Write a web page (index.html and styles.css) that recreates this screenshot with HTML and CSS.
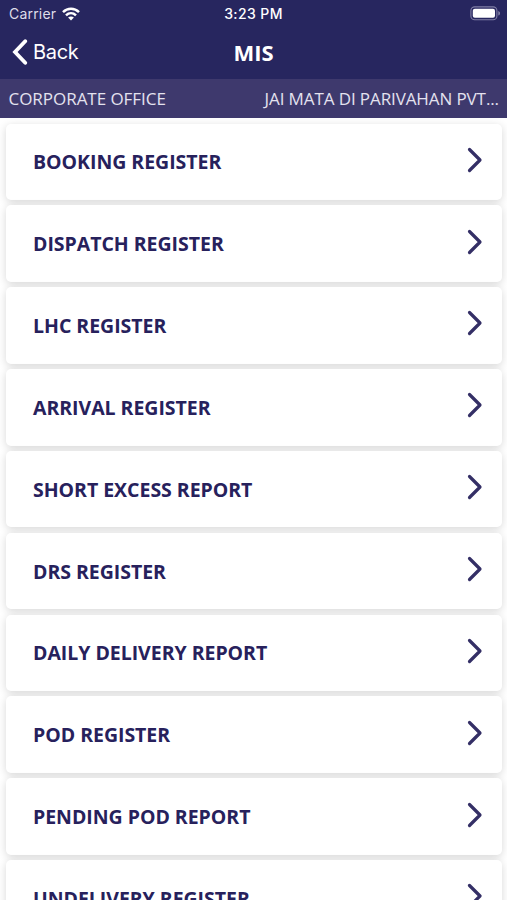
FILE: index.html
```html
<!DOCTYPE html>
<html lang="en">
<head>
<meta charset="utf-8">
<title>MIS</title>
<link rel="stylesheet" href="styles.css">
</head>
<body>
<header class="header">
  <div class="status">
    <div class="carrier"><span>Carrier</span>
      <svg class="wifi" width="18" height="14" viewBox="0 0 18 14" fill="none" stroke="#fff" stroke-width="2.5"><path d="M1 5.2C5.6.7 12.4.7 17 5.2M4 8.3c2.9-2.8 7.1-2.8 10 0"/><path d="M9 13.4 6.1 10.5c1.7-1.5 4.1-1.5 5.8 0z" fill="#fff" stroke="none"/></svg>
    </div>
    <div class="time">3:23 PM</div>
    <svg class="battery" width="31" height="15" viewBox="0 0 31 15"><rect x=".9" y=".9" width="26" height="12.8" rx="3.8" fill="none" stroke="#817fa6" stroke-width="1.1"/><rect x="2.8" y="2.8" width="22.2" height="9" rx="2" fill="#fff"/><path d="M28.4 5c2 .8 2 3.8 0 4.6z" fill="#9290b3"/></svg>
  </div>
  <nav class="nav">
    <a class="back"><svg width="16" height="26" viewBox="0 0 16 26" fill="none" stroke="#fff" stroke-width="3.8" stroke-linecap="round" stroke-linejoin="miter"><path d="M13.2 2.2 3 13l10.2 10.8"/></svg><span>Back</span></a>
    <h1 class="title">MIS</h1>
    <span></span>
  </nav>
</header>
<div class="office"><span>CORPORATE OFFICE</span><span class="company">JAI MATA DI PARIVAHAN PVT...</span></div>
<main class="list">
  <a class="card"><span>BOOKING REGISTER</span><svg class="chevron" viewBox="0 0 16 26"><path d="m2.5 2.5 10.5 10.5-10.5 10.5"/></svg></a>
  <a class="card"><span>DISPATCH REGISTER</span><svg class="chevron" viewBox="0 0 16 26"><path d="m2.5 2.5 10.5 10.5-10.5 10.5"/></svg></a>
  <a class="card"><span>LHC REGISTER</span><svg class="chevron" viewBox="0 0 16 26"><path d="m2.5 2.5 10.5 10.5-10.5 10.5"/></svg></a>
  <a class="card"><span>ARRIVAL REGISTER</span><svg class="chevron" viewBox="0 0 16 26"><path d="m2.5 2.5 10.5 10.5-10.5 10.5"/></svg></a>
  <a class="card"><span>SHORT EXCESS REPORT</span><svg class="chevron" viewBox="0 0 16 26"><path d="m2.5 2.5 10.5 10.5-10.5 10.5"/></svg></a>
  <a class="card"><span>DRS REGISTER</span><svg class="chevron" viewBox="0 0 16 26"><path d="m2.5 2.5 10.5 10.5-10.5 10.5"/></svg></a>
  <a class="card"><span>DAILY DELIVERY REPORT</span><svg class="chevron" viewBox="0 0 16 26"><path d="m2.5 2.5 10.5 10.5-10.5 10.5"/></svg></a>
  <a class="card"><span>POD REGISTER</span><svg class="chevron" viewBox="0 0 16 26"><path d="m2.5 2.5 10.5 10.5-10.5 10.5"/></svg></a>
  <a class="card"><span>PENDING POD REPORT</span><svg class="chevron" viewBox="0 0 16 26"><path d="m2.5 2.5 10.5 10.5-10.5 10.5"/></svg></a>
  <a class="card"><span>UNDELIVERY REGISTER</span><svg class="chevron" viewBox="0 0 16 26"><path d="m2.5 2.5 10.5 10.5-10.5 10.5"/></svg></a>
</main>
</body>
</html>
```
FILE: styles.css
```css
* { box-sizing: border-box; }
body {
  margin: 0;
  height: 900px;
  overflow: hidden;
  display: flex;
  flex-direction: column;
  background: #fff;
  font-family: "Open Sans", sans-serif;
}
.header { flex: none; height: 79px; background: #27265f; color: #fff; }
.status {
  height: 27px;
  padding: 0 9px;
  display: grid;
  grid-template-columns: 1fr auto 1fr;
  align-items: center;
  font: 14px/27px Inter, sans-serif;
}
.carrier { display: flex; align-items: center; gap: 6px; color: #dedde9; letter-spacing: .2px; }
.time { font-weight: 500; font-size: 14px; letter-spacing: .4px; }
.battery { justify-self: end; margin-right: -3px; }
.nav {
  height: 52px;
  padding: 0 12px 2px;
  display: grid;
  grid-template-columns: 1fr auto 1fr;
  align-items: center;
}
.back { display: flex; align-items: center; gap: 5px; font: 20px/26px Inter, sans-serif; letter-spacing: -.3px; }
.title { margin: 0; font-size: 22px; line-height: 30px; font-weight: 700; }
.office {
  flex: none;
  height: 39px;
  padding: 0 8px 0 8.5px;
  display: flex;
  align-items: center;
  justify-content: space-between;
  background: #3e396d;
  color: #e4e2ef;
  font-size: 17px;
  letter-spacing: -.04px;
  white-space: nowrap;
}
.company { letter-spacing: -.1px; }
.list {
  flex: 1;
  min-height: 0;
  overflow: hidden;
  padding: 5.5px 5px 0 6px;
}
.card {
  height: 76.6px;
  margin-bottom: 5.25px;
  padding: 0 19.3px 0 27px;
  display: flex;
  align-items: center;
  justify-content: space-between;
  border-radius: 5px;
  background: #fff;
  box-shadow: 0 2px 9px rgba(0, 0, 0, .16);
  color: #27215c;
  font-size: 19.5px;
  font-weight: 700;
  letter-spacing: -.03px;
  white-space: nowrap;
}
.chevron {
  width: 16px;
  height: 26px;
  margin-bottom: 4px;
  fill: none;
  stroke: #342f66;
  stroke-width: 3.2;
  stroke-linecap: round;
  stroke-linejoin: round;
}
```
